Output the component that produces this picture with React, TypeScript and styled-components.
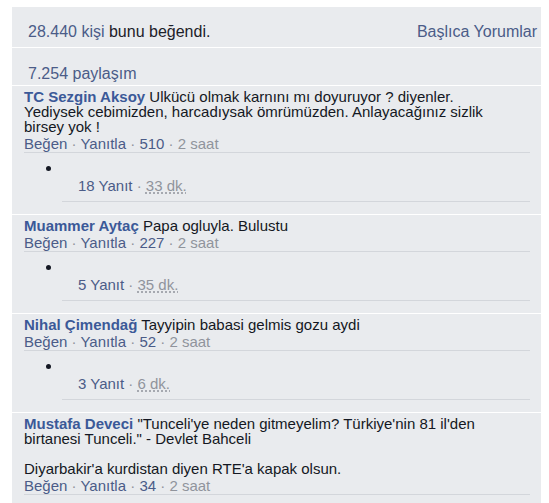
import React from "react";
import styled, { createGlobalStyle } from "styled-components";

const GlobalStyle = createGlobalStyle`
  body {
    margin: 0;
    background: #ffffff;
    font-family: "Liberation Sans", Arial, sans-serif;
  }
`;

//------------Styled Components-------------
const Page = styled.div`
  padding: 7px 8px 0 12px;
`;

const Panel = styled.div`
  background: #e9ebee;
  min-height: 496px;
`;

const LikesRow = styled.div`
  display: flex;
  justify-content: space-between;
  align-items: baseline;
  padding: 16px 4px 6px 16px;
  font-size: 16px;
  line-height: 18px;
  border-bottom: 1px solid #ffffff;
  color: #1d2129;
`;

const SharesRow = styled.div`
  padding: 17px 16px 2px;
  font-size: 16px;
  line-height: 18px;
`;

const Link = styled.a`
  color: #4b5c88;
  text-decoration: none;
  cursor: pointer;
`;

const CommentBox = styled.div`
  border-top: 1px solid #ffffff;
  padding: 3px 11px 0 12px;
  font-size: 15px;
  line-height: 15px;
  color: #1d2129;
`;

const CommentText = styled.div`
  padding-right: 24px;
  color: #141823;
`;

const Author = styled.a`
  color: #3b5998;
  font-weight: bold;
  text-decoration: none;
`;

const Meta = styled.div`
  padding-top: 1px;
  line-height: 17px;
  border-bottom: 1px solid #d3d6db;
  color: #90949c;
`;

const Dot = styled.span`
  color: #90949c;
`;

const ReplyList = styled.ul`
  margin: 7px 0 0 38px;
  padding: 0;
  list-style: disc;
  color: #141823;
`;

const ReplyItem = styled.li`
  &::marker {
    font-size: 15px;
  }
`;

const MarkerLine = styled.div`
  &::before {
    content: "\\00a0";
  }
`;

const ReplyRow = styled.div`
  padding: 3px 0 8px 16px;
  margin-bottom: 12px;
  border-bottom: 1px solid #d3d6db;
  color: #90949c;
`;

const Time = styled.abbr`
  color: #90949c;
  text-decoration: underline dotted #90949c;
  text-underline-offset: 2px;
`;

//=========================================

type CommentData = {
  author: string;
  text: React.ReactNode;
  likes: number;
  time: string;
  replies?: { count: number; time: string };
};

const comments: CommentData[] = [
  {
    author: "TC Sezgin Aksoy",
    text: (
      <>
        Ulkücü olmak karnını mı doyuruyor ? diyenler.
        <br />
        Yediysek cebimizden, harcadıysak ömrümüzden. Anlayacağınız sizlik
        birsey yok !
      </>
    ),
    likes: 510,
    time: "2 saat",
    replies: { count: 18, time: "33 dk." },
  },
  {
    author: "Muammer Aytaç",
    text: "Papa ogluyla. Bulustu",
    likes: 227,
    time: "2 saat",
    replies: { count: 5, time: "35 dk." },
  },
  {
    author: "Nihal Çimendağ",
    text: "Tayyipin babasi gelmis gozu aydi",
    likes: 52,
    time: "2 saat",
    replies: { count: 3, time: "6 dk." },
  },
  {
    author: "Mustafa Deveci",
    text: (
      <>
        "Tunceli'ye neden gitmeyelim? Türkiye'nin 81 il'den birtanesi
        Tunceli." - Devlet Bahceli
        <br />
        <br />
        Diyarbakir'a kurdistan diyen RTE'a kapak olsun.
      </>
    ),
    likes: 34,
    time: "2 saat",
  },
];

function Comment({ data }: { data: CommentData }) {
  return (
    <CommentBox>
      <CommentText>
        <Author>{data.author}</Author> {data.text}
      </CommentText>
      <Meta>
        <Link>Beğen</Link>
        <Dot> · </Dot>
        <Link>Yanıtla</Link>
        <Dot> · </Dot>
        <Link>{data.likes}</Link>
        <Dot> · </Dot>
        {data.time}
      </Meta>
      {data.replies && (
        <ReplyList>
          <ReplyItem>
            <MarkerLine />
            <ReplyRow>
              <Link>{data.replies.count} Yanıt</Link>
              <Dot> · </Dot>
              <Time>{data.replies.time}</Time>
            </ReplyRow>
          </ReplyItem>
        </ReplyList>
      )}
    </CommentBox>
  );
}

export default function App() {
  return (
    <Page>
      <GlobalStyle />
      <Panel>
        <LikesRow>
          <span>
            <Link>28.440 kişi</Link> bunu beğendi.
          </span>
          <Link>Başlıca Yorumlar</Link>
        </LikesRow>
        <SharesRow>
          <Link>7.254 paylaşım</Link>
        </SharesRow>
        {comments.map((c) => (
          <Comment key={c.author} data={c} />
        ))}
      </Panel>
    </Page>
  );
}
